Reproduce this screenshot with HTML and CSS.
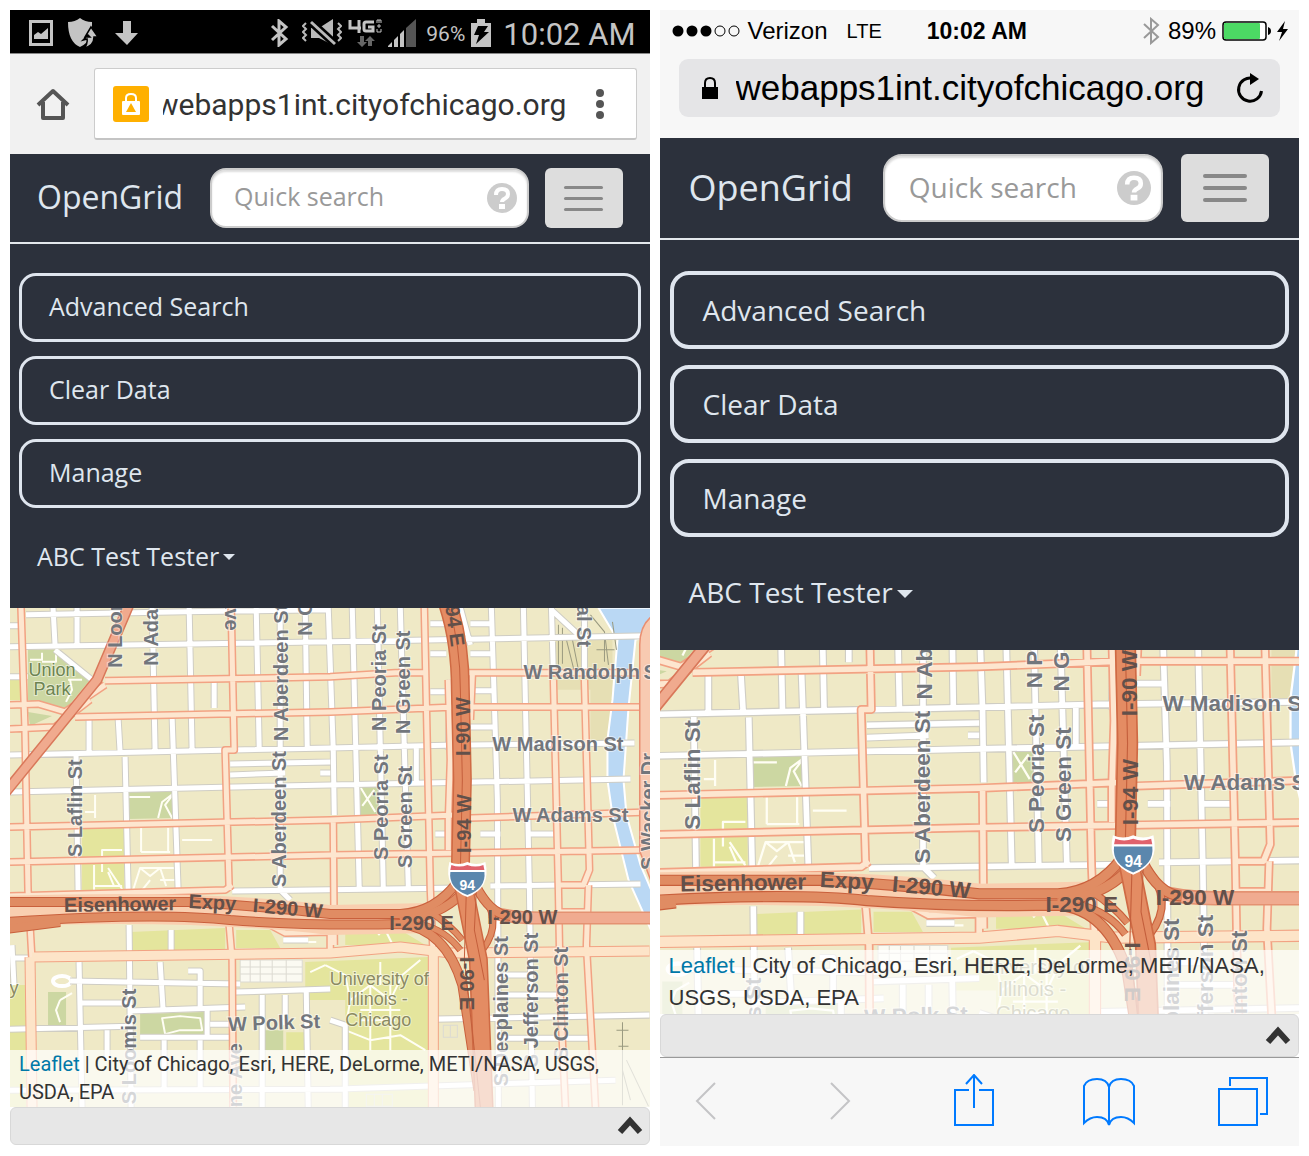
FILE: index.html
```html
<!DOCTYPE html>
<html lang="en">
<head>
<meta charset="utf-8">
<title>OpenGrid</title>
<link rel="stylesheet" href="styles.css">
</head>
<body>
<svg class="defs" aria-hidden="true">
  <defs>
    <path id="streets" d="M26 615L185 612L330 610M10 647L330 642L649 636M10 755L330 748L455 745M470 745L634 743M10 792L330 785L630 779M230 764L330 762M230 775L285 773M320 773h10M232 891L460 888M490 886L640 884M10 626h10M10 677h18M53 608L55 645M77 608V645M55 650L92 680M152 608L155 752M189 608L192 752M214 682V708M256 608L259 748M280 608V890L290 900M305 608L307 748M89 718V752M118 718L120 752M172 718L178 890M76 755L78 890M125 757L128 890M328 608L333 750L334 815M352 608L359 890M377 608L383 888M400 608L408 888M416 748V782M491 608L497 800L498 1107M523 608L529 890L532 1107M551 608L553 675M584 608V675M551 610L578 635M460 608L470 645M450 680L448 750M430 624h14M430 654h16M430 692h16M470 624h22M470 654h22M470 691h22M470 727h24M435 834h20M480 834h20M530 834h24M70 981L240 984M80 1003H130M10 1029L130 1026M130 1011L245 1007M235 992L330 989M140 1037H235M10 1090L330 1089L615 1080M435 1019L649 1015M79 962L82 1107M129 925L131 1107M171 930V950M160 962L163 1010M188 971H200V1010M207 1010V1038M262 995V1107M285 995V1025M306 990L308 1107M107 1030V1060M164 1040V1090M200 1040V1090M210 1024H240M500 975h30M500 995h60M500 1038h90M12 945L14 985M12 958H33M330 1020L345 1025V1107M283 940h25"/>
    <path id="avenues" d="M105 681L330 677L395 673H425M468 673H649M75 717L330 712L455 707H649M10 705L38 704L65 712L105 685M10 729L55 727L90 700M10 827L330 820L455 815M470 818L649 812M10 862L330 855L649 850M10 896L225 890L232 885M270 925L285 933L330 932V952M21 608L25 730L28 890L32 960M231 608L234 750H225L229 890M229 925L232 960L233 1107M424 608L430 890L433 960M448 680L450 760L448 820V850M472 675L470 720M553 680L558 890L560 1000L565 1107M584 680L589 870L583 885H560M588 885L586 945L595 1107M333 820L334 945M560 912H586"/>
    <path id="boulevards" d="M32 957L330 953L400 947L450 953L649 951M30 957L32 1107M433 955V1107"/>
    <path id="paths" d="M30 660h12v-7M42 662h14v-8M68 680h14M66 702L72 690L70 680M95 795V818M85 812h10M128 797h22M158 818L162 802L174 793L165 805L172 818M141 828V852M168 828V852M141 852H170M182 840h30M102 872V850h20M94 865V890M94 886h28M108 868L122 889M114 886L108 872M133 890L140 868L150 876L160 868L166 886M140 868h36M150 880l-8 10M160 880h18M360 787L375 812M374 790L362 806M285 935h28M290 942h26M378 935L384 928L392 944M325 965L345 975L350 1000L370 985L390 1000L402 975L420 960M350 1000L345 1030L370 1040L400 1035L425 1050M360 1010h40M360 1020h35M370 985V1050M390 985V1050M380 962V985M310 972L325 965M60 1000L56 1010L60 1022M60 1000L72 993M162 1018L180 1016L200 1018L202 1030L180 1030L165 1034Z"/>
    <g id="basemap">
      <rect x="10" y="600" width="680" height="520" fill="#efe9c6"/>
      <path fill="#ccd7a2" d="M28 650H55L90 680L65 710L28 700ZM28 712L52 716L30 726ZM128 792L175 790V818L128 819ZM140 1014L205 1012V1036H140ZM48 992H66V1025H48ZM262 1030H283V1050H262ZM360 787H378V815H360Z"/>
      <path fill="#e4e59d" d="M82 828L124 827V890H82ZM130 932L225 928V950L130 952ZM10 985H26V1107H10ZM10 680H20V700H10ZM305 962L428 957V1107H345V1000H305ZM236 930L270 930L280 948H236ZM345 932L400 930L425 945H345ZM286 1032H304V1050H286Z"/>
      <path fill="#e6dfb4" d="M555 640H612V700L606 740H590V690H555Z"/>
      <path fill="#bad8f4" stroke="#fff" stroke-width="2" d="M598 608H660V632L635 640L628 708L623 780L626 815L640 865L655 900V940L628 880L612 815L607 780V740L612 700L617 640Z"/>
      <path fill="none" stroke="#9a9a80" stroke-width="1" d="M558 625V665M562 628V664M566 640L574 672M572 640L578 670M590 615L604 632L608 665M596 650H614M604 640V662M612 622L616 650M622 1022V1105M616 1030h12M618 1046h10M626 1060L648 1106M622 1070L630 1100"/>
      <use href="#paths" class="paths"/>
      <g fill="none" stroke="#dcdad2" stroke-width="1"><path fill="#fbfaf2" d="M240 960h62v22h-62z"/><path d="M240 967h62M240 974h62M250 960v22M260 960v22M272 960v22M286 960v22M443 1025h14v12h-14zM450 1025v12M366 1094h26v12h-26zM374 1094v12M382 1094v12"/></g>
      <ellipse cx="62" cy="981" rx="9" ry="5" fill="#efe9c6" stroke="#fff" stroke-width="4"/>
      <use href="#streets" class="street-case"/>
      <use href="#streets" class="street"/>
      <use href="#avenues" class="avenue-case"/>
      <use href="#boulevards" class="boulevard-case"/>
      <use href="#avenues" class="avenue"/>
      <use href="#boulevards" class="boulevard"/>
      <g fill="none">
        <path stroke="#e98f72" stroke-width="13" d="M660 618Q645 625 645 645V850L660 890"/>
        <path stroke="#f8cab1" stroke-width="10" d="M660 618Q645 625 645 645V850L660 890"/>
        <path stroke="#d9785a" stroke-width="11" d="M131 600L97 680L5 793"/>
        <path stroke="#f0aa8e" stroke-width="8" d="M131 600L97 680L5 793"/>
        <path stroke="#e49272" stroke-width="13" d="M490 912Q510 918 540 918H660"/>
        <path stroke="#f0ab90" stroke-width="10" d="M490 912Q510 918 540 918H660"/>
        <g stroke="#f9cfb0" stroke-width="30"><path d="M5 911Q200 904 330 920L430 918"/></g>
        <g stroke="#c9603c" stroke-width="10">
          <path d="M5 902H190Q260 906 330 914H400Q435 912 457 882"/>
          <path d="M5 922Q160 912 230 920Q310 926 400 924Q445 928 462 985L478 1090"/>
          <path d="M5 929L60 922M400 922Q440 915 460 895M475 885Q490 915 510 916"/>
          <path stroke-width="7" d="M478 890Q505 920 482 950M420 924Q445 930 460 950M430 912Q450 925 462 940"/>
        </g>
        <g stroke="#e08c63" stroke-width="8">
          <path d="M5 902H190Q260 906 330 914H400Q435 912 457 882"/>
          <path d="M5 922Q160 912 230 920Q310 926 400 924Q445 928 462 985L478 1090"/>
          <path d="M5 929L60 922M400 922Q440 915 460 895M475 885Q490 915 510 916"/>
          <path stroke-width="5" d="M478 890Q505 920 482 950M420 924Q445 930 460 950M430 912Q450 925 462 940"/>
        </g>
        <path stroke="#cf6a44" stroke-width="19" d="M446 600Q460 640 460 690L462 780L460 870L468 910L478 960L484 1115"/>
        <path stroke="#e48c63" stroke-width="16" d="M446 600Q460 640 460 690L462 780L460 870L468 910L478 960L484 1115"/>
        <path stroke="#c45f3c" stroke-width="1" d="M446 600Q460 640 460 690L462 780L460 870M466 890L464 960L474 1050L480 1107M476 890L474 930L484 980"/>
      </g>
    </g>
    <g id="shield">
      <path fill="#fff" d="M449 862Q458 866 467 862Q476 866 485 862Q491 888 467 897Q443 888 449 862Z"/>
      <path fill="#e0626c" d="M451 865Q459 868 467 865Q475 868 483 865L484 870H450Z"/>
      <path fill="#5b87ad" d="M450 872H484Q486 888 467 895Q448 888 450 872Z"/>
    </g>
    <path id="bluetooth" fill="none" stroke="currentColor" d="M2 7L16 20L9 26V2L16 8L2 21"/>
    <g id="help"><circle cx="15" cy="15" r="15" fill="#ccc"/><path d="M9 12Q9 6 15 6Q21 6 21 11Q21 14 18 15.500Q15 17 15 19" fill="none" stroke="#fff" stroke-width="4"/><path d="M12 21h6v5h-6z" fill="#fff"/></g>
    <path id="up" d="M3 16L13 5L23 16" fill="none" stroke="#333" stroke-width="6"/>
  </defs>
</svg>

<main class="phones">
<section class="phone android" aria-label="Android">
  <div class="status">
    <svg width="24" height="26" viewBox="0 0 24 26"><path fill="none" stroke="#c4c4c4" stroke-width="3" d="M1.500 1.500h21v23h-21z"/><path fill="#c4c4c4" d="M5 19v-4l4-3 3 2 7-6v11z"/></svg>
    <svg class="gap-a" width="30" height="30" viewBox="0 0 30 30"><path fill="#c4c4c4" d="M0 4Q7 4 12 0Q17 4 24 4V18Q20 25 12 29Q0 24 0 4Z"/><path fill="#c4c4c4" stroke="#000" stroke-width="1.500" d="M23 9L30 19H26Q26 28 16 30Q20 26 19 21L15 22L20 17L22 19H17Z"/></svg>
    <svg class="gap-b" width="24" height="26" viewBox="0 0 24 26"><path fill="#c4c4c4" d="M8 1h8v12h7L12 25L0 13h8z"/></svg>
    <span class="push"></span>
    <svg width="20" height="28" viewBox="0 0 20 28"><use href="#bluetooth" stroke-width="3"/></svg>
    <svg class="gap-c" width="40" height="28" viewBox="0 0 40 28"><path fill="none" stroke="#b9b9b9" stroke-width="2" d="M4 4l-3 3 3 3-3 3 3 3-3 3 3 3M36 4l3 3-3 3 3 3-3 3 3 3-3 3"/><path fill="#b9b9b9" d="M9 9h8L31 0V26L17 19H9Z"/><path fill="none" stroke="#000" stroke-width="8" d="M9 3L33 25"/><path fill="none" stroke="#b9b9b9" stroke-width="3" d="M9 3L33 25"/></svg>
    <svg class="gap-d" width="34" height="30" viewBox="0 0 34 30"><g fill="none" stroke="#c4c4c4" stroke-width="3"><path d="M2 2v8h11M11 2v13M26 4H18q-2 0-2 2v5q0 2 2 2h7V9h-5"/></g><path fill="none" stroke="#c4c4c4" stroke-width="1" d="M29 11v3h4v-3M29 8h4M31 6v4M29 2h4M29 2v3M31 2v3M33 2v3"/><path fill="#666" d="M12 18h4v6h3l-5 5-5-5h3zM20 28h4v-5h3l-5-5-5 5h3z"/></svg>
    <svg class="gap-d" width="28" height="28" viewBox="0 0 28 28"><path fill="#555" d="M18 28V9L28 0V28Z"/><path fill="#c4c4c4" d="M0 28v-1l4-4v5zM6 28v-7l4-4v11zM12 28V15l4-4v17z"/></svg>
    <span class="percent">96%</span>
    <svg class="gap-d" width="20" height="28" viewBox="0 0 20 28"><path fill="#c4c4c4" d="M0 4h6V0h8v4h6v24H0z"/><path fill="#000" d="M7 7h10l-4 6h5L5 25l3-9H3z"/></svg>
    <time class="clock">10:02 AM</time>
  </div>
  <div class="browser">
    <button class="plain" aria-label="Home"><svg width="34" height="34" viewBox="0 0 34 34"><path fill="none" stroke="#555" stroke-width="4" stroke-linejoin="round" d="M2 18L17 4L32 18M7 15V31H27V15"/></svg></button>
    <div class="address">
      <svg width="36" height="36" viewBox="0 0 36 36"><rect width="36" height="36" rx="3" fill="#ffb000"/><path fill="none" stroke="#fff" stroke-width="2" d="M13 16v-4q0-4 5-4t5 4v4"/><rect x="9" y="15" width="18" height="14" rx="1" fill="#fff"/><path fill="#ffb000" d="M18 17l5 9H13z"/></svg>
      <input class="url" type="text" aria-label="Address" value="webapps1int.cityofchicago.org">
      <button class="plain" aria-label="More"><svg width="8" height="30" viewBox="0 0 8 30"><g fill="#555"><circle cx="4" cy="4" r="4"/><circle cx="4" cy="15" r="4"/><circle cx="4" cy="26" r="4"/></g></svg></button>
    </div>
  </div>
  <header class="navbar">
    <a class="brand" href="#">OpenGrid</a>
    <div class="search"><input type="text" placeholder="Quick search" aria-label="Quick search"><svg viewBox="0 0 30 30"><use href="#help"/></svg></div>
    <button class="toggle" aria-label="Menu"><i></i><i></i><i></i></button>
  </header>
  <nav class="menu">
    <button class="item">Advanced Search</button>
    <button class="item">Clear Data</button>
    <button class="item">Manage</button>
    <button class="user">ABC Test Tester<span class="caret"></span></button>
  </nav>
  <div class="map">
    <svg class="tiles" viewBox="10 608 639 499" preserveAspectRatio="xMidYMid slice">
      <use href="#basemap"/>
      <g class="labels">
        <text transform="translate(122 668) rotate(-90)">N Loom</text>
        <text transform="translate(158 666) rotate(-90)">N Ada</text>
        <text transform="translate(225 595) rotate(90)">Ave</text>
        <text transform="translate(288 741) rotate(-90)">N Aberdeen St</text>
        <text transform="translate(312 636) rotate(-90)">N C</text>
        <text transform="translate(386 731) rotate(-90)">N Peoria St</text>
        <text transform="translate(410 734) rotate(-90)">N Green St</text>
        <text transform="translate(82 857) rotate(-90)">S Laflin St</text>
        <text transform="translate(286 887) rotate(-90)">S Aberdeen St</text>
        <text transform="translate(388 860) rotate(-90)">S Peoria St</text>
        <text transform="translate(412 868) rotate(-90)">S Green St</text>
        <text transform="translate(577 605) rotate(90)">al St</text>
        <text x="523" y="679">W Randolph</text><text x="643" y="679">S</text>
        <text x="492" y="751">W Madison St</text>
        <text x="512" y="822">W Adams St</text>
        <text transform="translate(654 870) rotate(-90)">S Wacker Dr</text>
        <text transform="translate(136 1104) rotate(-90)">S Loomis St</text>
        <text transform="translate(242 1107) rotate(-90)">ne Ave</text>
        <text transform="translate(228 1031) rotate(-2)">W Polk St</text>
        <text transform="translate(508 1086) rotate(-90)">S Desplaines St</text>
        <text transform="translate(538 1067) rotate(-90)">S Jefferson St</text>
        <text transform="translate(568 1060) rotate(-90)">S Clinton St</text>
      </g>
      <g class="labels dark">
        <text transform="translate(444 600) rotate(82)">-94 E</text>
        <text transform="translate(470 756) rotate(-90)">I-90 W</text>
        <text transform="translate(471 853) rotate(-90)">I-94 W</text>
        <text transform="translate(64 912) rotate(-1)">Eisenhower</text>
        <text transform="translate(188 908) rotate(3)">Expy</text>
        <text transform="translate(252 912) rotate(5)">I-290 W</text>
        <text x="389" y="930">I-290 E</text>
        <text x="487" y="924">I-290 W</text>
        <text transform="translate(460 957) rotate(90)">I-90 E</text>
      </g>
      <g class="labels place"><text class="green" x="52" y="676">Union</text><text class="green" x="52" y="695">Park</text><text x="379" y="985">University of</text><text x="377" y="1005">Illinois -</text><text x="378" y="1026">Chicago</text><text x="14" y="994">y</text></g>
      <use href="#shield"/><text class="route" x="467" y="890">94</text>
    </svg>
    <p class="credit"><a href="#">Leaflet</a> | City of Chicago, Esri, HERE, DeLorme, METI/NASA, USGS, USDA, EPA</p>
  </div>
  <div class="drawer"><button class="plain" aria-label="Expand"><svg width="26" height="20" viewBox="0 0 26 20"><use href="#up"/></svg></button></div>
</section>

<section class="phone ios" aria-label="iPhone">
  <div class="status">
    <svg width="68" height="12" viewBox="0 0 68 12"><circle cx="6" cy="6" r="5.500"/><circle cx="20" cy="6" r="5.500"/><circle cx="34" cy="6" r="5.500"/><g fill="none" stroke="#000"><circle cx="48" cy="6" r="5"/><circle cx="62" cy="6" r="5"/></g></svg>
    <span class="carrier">Verizon</span><span class="lte">LTE</span>
    <time class="clock">10:02 AM</time>
    <svg class="bt" width="18" height="28" viewBox="0 0 18 28"><use href="#bluetooth" stroke-width="2"/></svg>
    <span class="percent">89%</span>
    <svg class="gap-d" width="68" height="20" viewBox="0 0 68 20"><rect x="1" y="1" width="43" height="18" rx="3" fill="#fff" stroke="#000" stroke-width="1.500"/><rect x="2" y="2" width="36" height="16" rx="1" fill="#4cd964"/><path d="M46 6q3 1 3 4t-3 4zM63 0L55 11h5l-3 9 9-12h-5z"/></svg>
  </div>
  <div class="browser">
    <div class="address">
      <svg width="16" height="22" viewBox="0 0 16 22"><path d="M0 10h16v12H0z"/><path d="M3 11V6q0-5 5-5t5 5v5" fill="none" stroke="#000" stroke-width="2"/></svg>
      <input class="url" type="text" aria-label="Address" value="webapps1int.cityofchicago.org">
      <button class="plain" aria-label="Reload"><svg width="28" height="32" viewBox="0 0 28 32"><path d="M17 6.500A11.500 11.500 0 1 0 25.500 19" fill="none" stroke="#000" stroke-width="3"/><path d="M14 1l9 6-9 6z"/></svg></button>
    </div>
  </div>
  <header class="navbar">
    <a class="brand" href="#">OpenGrid</a>
    <div class="search"><input type="text" placeholder="Quick search" aria-label="Quick search"><svg viewBox="0 0 30 30"><use href="#help"/></svg></div>
    <button class="toggle" aria-label="Menu"><i></i><i></i><i></i></button>
  </header>
  <nav class="menu">
    <button class="item">Advanced Search</button>
    <button class="item">Clear Data</button>
    <button class="item">Manage</button>
    <button class="user">ABC Test Tester<span class="caret"></span></button>
  </nav>
  <div class="map">
    <svg class="tiles" viewBox="46 697 569 324" preserveAspectRatio="xMidYMid slice">
      <use href="#basemap"/>
      <g class="labels">
        <text transform="translate(288 741) rotate(-90)">N Ab</text>
        <text transform="translate(386 731) rotate(-90)">N P</text>
        <text transform="translate(410 734) rotate(-90)">N G</text>
        <text transform="translate(82 857) rotate(-90)">S Laflin St</text>
        <text transform="translate(286 887) rotate(-90)">S Aberdeen St</text>
        <text transform="translate(388 860) rotate(-90)">S Peoria St</text>
        <text transform="translate(412 868) rotate(-90)">S Green St</text>
        <text x="493" y="751">W Madison S</text>
        <text x="512" y="822">W Adams S</text>
        <text transform="translate(136 1104) rotate(-90)">S Loomis St</text>
        <text transform="translate(228 1031) rotate(-2)">W Polk St</text>
        <text transform="translate(508 1086) rotate(-90)">S Desplaines St</text>
        <text transform="translate(538 1067) rotate(-90)">S Jefferson St</text>
        <text transform="translate(568 1060) rotate(-90)">S Clinton St</text>
      </g>
      <g class="labels dark">
        <text transform="translate(470 756) rotate(-90)">I-90 W</text>
        <text transform="translate(471 853) rotate(-90)">I-94 W</text>
        <text transform="translate(64 912) rotate(-1)">Eisenhower</text>
        <text transform="translate(188 908) rotate(3)">Expy</text>
        <text transform="translate(252 912) rotate(5)">I-290 W</text>
        <text x="389" y="930">I-290 E</text>
        <text x="487" y="924">I-290 W</text>
        <text transform="translate(460 957) rotate(90)">I-90 E</text>
      </g>
      <g class="labels place"><text x="379" y="985">University of</text><text x="377" y="1005">Illinois -</text><text x="378" y="1026">Chicago</text></g>
      <use href="#shield"/><text class="route" x="467" y="890">94</text>
    </svg>
    <p class="credit"><a href="#">Leaflet</a> | City of Chicago, Esri, HERE, DeLorme, METI/NASA, USGS, USDA, EPA</p>
  </div>
  <div class="drawer"><button class="plain" aria-label="Expand"><svg width="26" height="20" viewBox="0 0 26 20"><use href="#up"/></svg></button></div>
  <div class="toolbar">
    <button class="plain" aria-label="Back"><svg width="22" height="52" viewBox="0 0 22 52"><path d="M20 9L2 27L20 45" stroke="#c4c4c6"/></svg></button>
    <button class="plain" aria-label="Forward"><svg width="22" height="52" viewBox="0 0 22 52"><path d="M2 9L20 27L2 45" stroke="#c4c4c6"/></svg></button>
    <button class="plain" aria-label="Share"><svg width="40" height="52" viewBox="0 0 40 52"><path d="M15 16H1V51H39V16H25M20 34V1M12 10L20 1L28 10"/></svg></button>
    <button class="plain" aria-label="Bookmarks"><svg width="52" height="52" viewBox="0 0 52 52"><path d="M26 13Q24 5 14 5Q4 5 1 12V49Q7 43 14 43Q24 43 26 51Q28 43 38 43Q45 43 51 49V12Q48 5 38 5Q28 5 26 13V51"/></svg></button>
    <button class="plain" aria-label="Tabs"><svg width="50" height="52" viewBox="0 0 50 52"><path d="M1 15H39V51H1ZM12 12V4H49V40H42"/></svg></button>
  </div>
</section>
</main>
</body>
</html>
```
FILE: styles.css
```css
* { box-sizing: border-box; }
body { margin: 10px; background: #fff; font-family: "Open Sans", sans-serif; }
svg { display: block; flex: none; }
button, input { font: inherit; border: 0; padding: 0; margin: 0; background: none; color: inherit; min-width: 0; }
input { outline: none; }
a { text-decoration: none; }
.plain { flex: none; display: flex; justify-content: center; }
.defs { position: absolute; width: 0; height: 0; }

.phones { display: grid; grid-template-columns: 1fr 1fr; gap: 10px; align-items: start; }
.phone { min-width: 0; overflow: hidden; }
.status, .browser, .address, .navbar, .search { display: flex; align-items: center; }

/* Android browser chrome */
.android .status { height: 44px; padding: 2px 14px 0 19px; background: #000; color: #c4c4c4; font-family: Roboto, sans-serif; border-bottom: 1px solid #888; }
.gap-a { margin-left: 15px; }
.gap-b { margin-left: 17px; }
.gap-c { margin-left: 12px; }
.gap-d { margin-left: 6px; }
.push { flex: 1; }
.android .percent { margin-left: 10px; font-size: 21px; padding-top: 3px; }
.android .clock { margin-left: 12px; font-size: 31px; line-height: 40px; padding-top: 4px; }
.android .browser { height: 100px; padding: 0 13px 0 26px; gap: 24px; background: #f1f1f1; }
.android .address { flex: 1; height: 72px; padding: 0 32px 0 18px; background: #fff; border: 1px solid #ccc; border-bottom: 2px solid #c4c4c4; border-radius: 3px; }
.url { flex: 1; }
.android .url { margin: 0 28px 0 14px; padding-top: 2px; font: 30px/40px Roboto, sans-serif; color: #333; text-indent: -7px; }

/* iOS browser chrome */
.ios .status { height: 42px; padding: 0 9px 0 12px; background: #f7f7f7; font: 24px/32px "Liberation Sans", sans-serif; color: #000; }
.carrier { margin-left: 8px; }
.lte { margin-left: 19px; font-size: 20px; }
.ios .clock { flex: 1; padding-left: 45px; font-size: 23px; font-weight: bold; }
.bt { color: #999; }
.ios .percent { margin-left: 8px; }
.ios .browser { height: 86px; padding: 7px 19px 21px; background: #f7f7f7; }
.ios .address { flex: 1; height: 58px; padding: 0 16px 0 23px; background: #e5e5e7; border-radius: 9px; }
.ios .url { margin-left: 18px; font: 35px/44px "Liberation Sans", sans-serif; color: #000; }

/* OpenGrid */
.navbar { height: 90px; padding: 0 27px; background: #2c313c; border-bottom: 2px solid #e4e8ec; color: #dfe6ee; }
.brand { color: inherit; font-size: 32px; line-height: 44px; padding-bottom: 2px; }
.search { flex: 1; height: 60px; margin: 0 16px 0 27px; padding: 0 10px 0 22px; background: #fff; border: 2px solid #ccc; border-radius: 16px; box-shadow: inset 0 2px 2px #ddd; }
.search input { flex: 1; width: 100%; padding-bottom: 4px; font-size: 25px; color: #333; }
.search input::placeholder { color: #999; opacity: 1; }
.search svg { width: 30px; height: 30px; }
.toggle { flex: none; width: 78px; height: 60px; background: #ddd; border-radius: 6px; display: flex; flex-direction: column; align-items: center; justify-content: center; gap: 8px; }
.toggle i { width: 39px; height: 3px; border-radius: 2px; background: #888; }
.menu { display: flex; flex-direction: column; gap: 14px; height: 364px; padding: 29px 9px 0; background: #2c313c; color: #dfe6ee; font-size: 25px; line-height: 34px; }
.item { height: 69px; padding: 0 0 3px 27px; border: 3px solid #dfe5ee; border-radius: 17px; text-align: left; }
.user { height: 69px; padding: 0 18px 2px; display: flex; align-items: center; gap: 4px; }
.caret { border: 6px solid transparent; border-top-color: currentColor; border-bottom: 0; margin-top: 3px; }

.ios .navbar { height: 102px; padding: 0 30px 0 29px; }
.ios .brand { font-size: 36px; line-height: 48px; padding: 0; }
.ios .search { height: 68px; margin: 0 18px 0 30px; padding-left: 24px; border-radius: 19px; }
.ios .search input { font-size: 28px; padding-bottom: 2px; }
.ios .search svg { width: 34px; height: 34px; }
.ios .toggle { width: 88px; height: 68px; gap: 8px; }
.ios .toggle i { width: 44px; height: 4px; }
.ios .menu { height: 410px; padding: 31px 10px 0; gap: 16px; font-size: 28px; line-height: 38px; }
.ios .item { height: 78px; padding: 0 0 0 29px; border-width: 4px; border-radius: 19px; }
.ios .user { height: 78px; padding: 0 19px; }
.ios .caret { border-width: 8px; border-bottom: 0; }

/* Map */
.map { position: relative; overflow: hidden; background: #efe9c6; }
.tiles { width: 100%; height: 499px; }
.ios .tiles { height: 364px; }
.street-case, .street, .avenue-case, .avenue, .boulevard-case, .boulevard, .paths { fill: none; stroke-linejoin: round; }
.street-case { stroke: #cfcdc4; stroke-width: 7px; }
.street { stroke: #fff; stroke-width: 5px; }
.avenue-case { stroke: #f2a283; stroke-width: 8px; }
.avenue { stroke: #fde6cf; stroke-width: 5px; }
.boulevard-case { stroke: #f2a283; stroke-width: 11px; }
.boulevard { stroke: #fde4c8; stroke-width: 9px; }
.paths { stroke: #fffef4; stroke-width: 2px; }
.labels { font: bold 20px "Liberation Sans", sans-serif; fill: #72767c; stroke: #fff; stroke-opacity: .5; stroke-width: 2px; paint-order: stroke; }
.dark { fill: #62504a; stroke: none; }
.place { font-weight: normal; font-size: 18px; fill: #8b8a62; text-anchor: middle; }
.green { fill: #6d8452; }
.route { font: bold 14px "Liberation Sans", sans-serif; fill: #fff; text-anchor: middle; }
.credit { position: absolute; left: 0; right: 0; bottom: 0; margin: 0; padding: 0 9px 1px; background: rgba(255, 255, 255, .7); color: #333; font: 20px/28px Roboto, sans-serif; }
.credit a { color: #0078a8; }
.ios .credit { padding: 0 9px; font: 22px/32px "Liberation Sans", sans-serif; }
.drawer { height: 38px; padding: 0 6px; display: flex; align-items: center; justify-content: flex-end; background: #e7e7e7; border: 1px solid #d8d8d8; border-radius: 6px; }
.ios .drawer { height: 43px; padding: 0 7px; }
.toolbar { height: 89px; padding: 0 30px 4px 20px; display: flex; align-items: center; justify-content: space-between; background: #f7f7f7; border-top: 1px solid #999; }
.toolbar .plain { width: 52px; }
.toolbar path { fill: none; stroke: #007aff; stroke-width: 2px; }
.toolbar path[stroke] { stroke: #c4c4c6; }
```
